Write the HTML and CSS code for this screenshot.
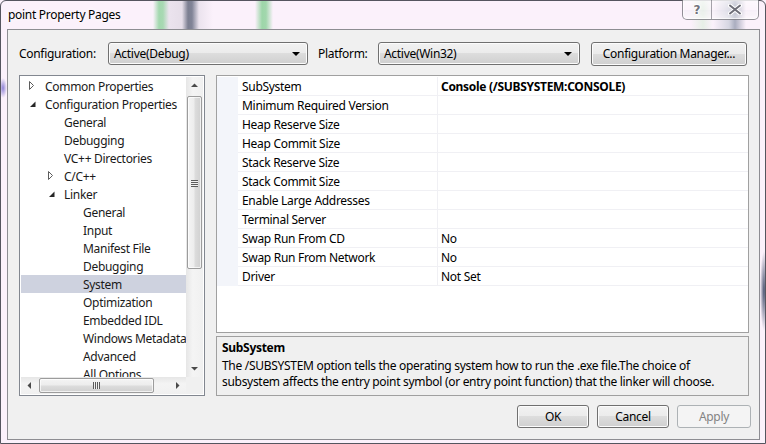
FILE: index.html
```html
<!DOCTYPE html>
<html>
<head>
<meta charset="utf-8">
<title>point Property Pages</title>
<link rel="stylesheet" href="styles.css">
</head>
<body>
<div class="window">
  <div class="titlebar">
    <span class="title">point Property Pages</span>
    <div class="caption-btns">
      <span class="cbtn cbtn-help">?</span>
      <span class="cbtn cbtn-close">
        <svg width="14" height="11" viewBox="0 0 14 11">
          <path d="M2 1.5 L12 9.5 M12 1.5 L2 9.5" stroke="#ffffff" stroke-width="4" stroke-linecap="round"/>
          <path d="M2 1.5 L12 9.5 M12 1.5 L2 9.5" stroke="#6e6e78" stroke-width="2" stroke-linecap="round"/>
        </svg>
      </span>
    </div>
  </div>
  <div class="client">
    <div class="toprow">
      <span class="lbl lbl-config">Configuration:</span>
      <div class="combo combo-config"><span class="combo-text">Active(Debug)</span><span class="caret"></span></div>
      <span class="lbl lbl-platform">Platform:</span>
      <div class="combo combo-platform"><span class="combo-text">Active(Win32)</span><span class="caret"></span></div>
      <button class="btn btn-cfgmgr">Configuration Manager...</button>
    </div>
    <div class="main">
      <div class="tree">
        <div class="tree-list">
          <div class="trow l0"><span class="exp"><svg width="18" height="18"><path d="M2.5 4.5 L6.5 8.5 L2.5 12.5 Z" fill="#fff" stroke="#5c5c5c"/></svg></span>Common Properties</div>
          <div class="trow l0"><span class="exp"><svg width="18" height="18"><path d="M3 12 L8.5 12 L8.5 6.5 Z" fill="#262626"/></svg></span>Configuration Properties</div>
          <div class="trow l1"><span class="exp"></span>General</div>
          <div class="trow l1"><span class="exp"></span>Debugging</div>
          <div class="trow l1"><span class="exp"></span>VC++ Directories</div>
          <div class="trow l1"><span class="exp"><svg width="18" height="18"><path d="M2.5 4.5 L6.5 8.5 L2.5 12.5 Z" fill="#fff" stroke="#5c5c5c"/></svg></span>C/C++</div>
          <div class="trow l1"><span class="exp"><svg width="18" height="18"><path d="M3 12 L8.5 12 L8.5 6.5 Z" fill="#262626"/></svg></span>Linker</div>
          <div class="trow l2"><span class="exp"></span>General</div>
          <div class="trow l2"><span class="exp"></span>Input</div>
          <div class="trow l2"><span class="exp"></span>Manifest File</div>
          <div class="trow l2"><span class="exp"></span>Debugging</div>
          <div class="trow l2 selected"><span class="exp"></span>System</div>
          <div class="trow l2"><span class="exp"></span>Optimization</div>
          <div class="trow l2"><span class="exp"></span>Embedded IDL</div>
          <div class="trow l2"><span class="exp"></span>Windows Metadata</div>
          <div class="trow l2"><span class="exp"></span>Advanced</div>
          <div class="trow l2"><span class="exp"></span>All Options</div>
        </div>
        <div class="vscroll">
          <div class="sb-arrow"><svg width="17" height="17"><path d="M5 10 L8.5 6.5 L12 10 Z" fill="#4a4a4a"/></svg></div>
          <div class="vtrack">
            <div class="vthumb"><span class="grip-v"></span></div>
          </div>
          <div class="sb-arrow"><svg width="17" height="17"><path d="M5 7 L8.5 10.5 L12 7 Z" fill="#4a4a4a"/></svg></div>
        </div>
        <div class="hscroll">
          <div class="sb-arrow"><svg width="17" height="17"><path d="M10 5 L6.5 8.5 L10 12 Z" fill="#4a4a4a"/></svg></div>
          <div class="htrack">
            <div class="hthumb"><span class="grip-h"></span></div>
          </div>
          <div class="sb-arrow"><svg width="17" height="17"><path d="M7 5 L10.5 8.5 L7 12 Z" fill="#4a4a4a"/></svg></div>
        </div>
        <div class="sb-corner"></div>
      </div>
      <div class="rightcol">
        <div class="pgrid">
          <div class="prow"><span class="gut"></span><span class="pname">SubSystem</span><span class="pval bold">Console (/SUBSYSTEM:CONSOLE)</span></div>
          <div class="prow"><span class="gut"></span><span class="pname">Minimum Required Version</span><span class="pval"></span></div>
          <div class="prow"><span class="gut"></span><span class="pname">Heap Reserve Size</span><span class="pval"></span></div>
          <div class="prow"><span class="gut"></span><span class="pname">Heap Commit Size</span><span class="pval"></span></div>
          <div class="prow"><span class="gut"></span><span class="pname">Stack Reserve Size</span><span class="pval"></span></div>
          <div class="prow"><span class="gut"></span><span class="pname">Stack Commit Size</span><span class="pval"></span></div>
          <div class="prow"><span class="gut"></span><span class="pname">Enable Large Addresses</span><span class="pval"></span></div>
          <div class="prow"><span class="gut"></span><span class="pname">Terminal Server</span><span class="pval"></span></div>
          <div class="prow"><span class="gut"></span><span class="pname">Swap Run From CD</span><span class="pval">No</span></div>
          <div class="prow"><span class="gut"></span><span class="pname">Swap Run From Network</span><span class="pval">No</span></div>
          <div class="prow"><span class="gut"></span><span class="pname">Driver</span><span class="pval">Not Set</span></div>
        </div>
        <div class="desc">
          <div class="desc-title">SubSystem</div>
          <div class="desc-text">The /SUBSYSTEM option tells the operating system how to run the .exe file.The choice of<br>subsystem affects the entry point symbol (or entry point function) that the linker will choose.</div>
        </div>
      </div>
    </div>
    <div class="buttons">
      <button class="btn btn-ok">OK</button>
      <button class="btn btn-cancel">Cancel</button>
      <button class="btn btn-apply" disabled>Apply</button>
    </div>
  </div>
</div>
</body>
</html>
```
FILE: styles.css
```css
html, body {
  margin: 0;
  padding: 0;
}
body {
  width: 766px;
  height: 444px;
  overflow: hidden;
  background: #fbf1fb;
  font-family: "Noto Sans", "Open Sans", sans-serif;
  font-size: 12px;
  letter-spacing: -0.3px;
  color: #000;
}
.window {
  position: relative;
  width: 766px;
  height: 444px;
  box-sizing: border-box;
  border: 1px solid #55555f;
  border-radius: 6px 6px 0 0;
  padding: 0 5px 3px 6px;
  display: flex;
  flex-direction: column;
  background:
    linear-gradient(90deg, #fbf1fb 0, #fbf1fb 152px, #a3d8af 158px, #a8d9b3 162px, #ebe3ee 168px, #e6dee9 181px, #7c7f91 187px, #818497 191px, #ebe3ee 198px, #fbf1fb 212px, #fbf1fb 254px, #9dd6a9 261px, #a2d7ad 265px, #fbf1fb 272px, #fbf1fb 690px, #e6efe6 702px, #fbf1fb 712px, #d6d6e2 728px, #aaadbf 734px, #fbf1fb 745px) top left / 100% 28px no-repeat,
    radial-gradient(ellipse 4px 40px at 763px 290px, #4d5673 0, rgba(77,86,115,0.5) 50%, rgba(251,241,251,0) 100%) no-repeat,
    radial-gradient(ellipse 4px 10px at 2px 87px, #8f83d6 0, rgba(251,241,251,0) 100%) no-repeat,
    #fbf1fb;
}
.titlebar {
  height: 28px;
  display: flex;
  align-items: center;
  flex: none;
}
.title {
  margin-left: 1px;
  margin-top: -1px;
  font-size: 12px;
  color: #000;
  text-shadow: 0 0 6px #fff, 0 0 6px #fff;
}
.caption-btns {
  position: absolute;
  top: -1px;
  right: 6px;
  display: flex;
  height: 19px;
  border: 1px solid rgba(60,60,70,0.55);
  border-top: none;
  border-radius: 0 0 5px 5px;
  overflow: hidden;
  background: linear-gradient(rgba(255,255,255,0.55), rgba(255,255,255,0.25) 50%, rgba(235,235,240,0.3) 51%, rgba(255,255,255,0.45));
  box-shadow: inset 0 0 0 1px rgba(255,255,255,0.6);
}
.cbtn {
  display: flex;
  align-items: center;
  justify-content: center;
}
.cbtn-help {
  width: 28px;
  border-right: 1px solid rgba(60,60,70,0.45);
  font-family: "DejaVu Sans", sans-serif;
  font-weight: bold;
  font-size: 12px;
  letter-spacing: 0;
  color: #72727c;
  text-shadow: 1px 0 0 #fff, -1px 0 0 #fff, 0 1px 0 #fff, 0 -1px 0 #fff;
}
.cbtn-close {
  width: 46px;
}
.client {
  flex: none;
  height: 411px;
  box-sizing: border-box;
  border: 1px solid #8d8d92;
  background: #f0f0f0;
  padding: 12px 8px 0 11px;
  display: flex;
  flex-direction: column;
}
.toprow {
  height: 23px;
  display: flex;
  align-items: center;
}
.lbl {
  white-space: nowrap;
}
.lbl-config {
  width: 89px;
}
.lbl-platform {
  margin-left: 10px;
  width: 60px;
}
.combo {
  height: 23px;
  box-sizing: border-box;
  border: 1px solid #707070;
  border-radius: 3px;
  background: linear-gradient(#f2f2f2 0%, #ebebeb 50%, #dddddd 50%, #cfcfcf 100%);
  box-shadow: inset 0 0 0 1px #fcfcfc;
  display: flex;
  align-items: center;
  padding: 0 4px 0 5px;
}
.combo-config {
  width: 200px;
}
.combo-platform {
  width: 202px;
}
.combo-text {
  flex: 1;
}
.caret {
  width: 0;
  height: 0;
  border-left: 4px solid transparent;
  border-right: 4px solid transparent;
  border-top: 4px solid #000;
  margin-right: 3px;
}
.btn {
  height: 23px;
  box-sizing: border-box;
  border: 1px solid #707070;
  border-radius: 3px;
  background: linear-gradient(#f2f2f2 0%, #ebebeb 50%, #dddddd 50%, #cfcfcf 100%);
  box-shadow: inset 0 0 0 1px #fcfcfc;
  font-family: inherit;
  font-size: 12px;
  letter-spacing: -0.3px;
  color: #000;
  padding: 0;
}
.btn-cfgmgr {
  margin-left: 11px;
  width: 156px;
  height: 24px;
}
.main {
  margin-top: 10px;
  display: flex;
  height: 321px;
}
.tree {
  width: 186px;
  height: 321px;
  box-sizing: border-box;
  border: 1px solid #828790;
  padding: 1px;
  background: #fff;
  display: grid;
  grid-template-columns: 165px 17px;
  grid-template-rows: 300px 17px;
}
.tree-list {
  overflow: hidden;
  white-space: nowrap;
}
.trow {
  height: 18px;
  box-sizing: border-box;
  padding-top: 2px;
  line-height: 16px;
  display: flex;
  align-items: flex-start;
  color: #1a1a1a;
}
.trow.selected {
  background: #ced2df;
}
.exp {
  width: 18px;
  height: 18px;
  flex: none;
  margin-top: -2px;
  margin-left: 6px;
}
.exp svg {
  display: block;
}
.l1 .exp {
  margin-left: 25px;
}
.l2 .exp {
  margin-left: 44px;
}
.vscroll {
  display: flex;
  flex-direction: column;
  background: linear-gradient(90deg, #e6e6e6, #f4f4f4 40%, #f0f0f0);
}
.sb-arrow {
  width: 17px;
  height: 17px;
  flex: none;
}
.sb-arrow svg {
  display: block;
}
.vtrack {
  flex: 1;
  padding: 2px 0 0 1px;
}
.vthumb {
  width: 15px;
  height: 173px;
  box-sizing: border-box;
  border: 1px solid #9c9c9c;
  border-radius: 2px;
  background: linear-gradient(90deg, #f4f4f4, #ededed 45%, #dcdcdc 55%, #d0d0d0);
  box-shadow: inset 0 0 0 1px rgba(255,255,255,0.7);
  display: flex;
  align-items: center;
  justify-content: center;
}
.grip-v {
  width: 7px;
  height: 7px;
  background: repeating-linear-gradient(#5c5c5c 0, #5c5c5c 1px, #f0f0f0 1px, #f0f0f0 2px);
  margin-top: 1px;
}
.hscroll {
  display: flex;
  background: linear-gradient(#e6e6e6, #f4f4f4 40%, #f0f0f0);
}
.htrack {
  flex: 1;
  padding: 1px 0 0 1px;
}
.hthumb {
  width: 115px;
  height: 15px;
  box-sizing: border-box;
  border: 1px solid #9c9c9c;
  border-radius: 2px;
  background: linear-gradient(#f4f4f4, #ededed 45%, #dcdcdc 55%, #d0d0d0);
  box-shadow: inset 0 0 0 1px rgba(255,255,255,0.7);
  display: flex;
  align-items: center;
  justify-content: center;
}
.grip-h {
  width: 7px;
  height: 7px;
  background: repeating-linear-gradient(90deg, #5c5c5c 0, #5c5c5c 1px, #f0f0f0 1px, #f0f0f0 2px);
}
.sb-corner {
  background: #f0f0f0;
}
.rightcol {
  margin-left: 11px;
  width: 533px;
  display: flex;
  flex-direction: column;
}
.pgrid {
  height: 258px;
  box-sizing: border-box;
  border: 1px solid #a0a0a0;
  padding-top: 1px;
  background: #fff;
}
.prow {
  display: grid;
  grid-template-columns: 21px 199px 1fr;
  height: 19px;
}
.gut {
  background: #f3f5fa;
}
.pname, .pval {
  box-sizing: border-box;
  height: 19px;
  line-height: 19px;
  border-bottom: 1px solid #f0f0f4;
  white-space: nowrap;
  overflow: hidden;
}
.pname {
  padding-left: 4px;
}
.pval {
  border-left: 1px solid #f0f0f4;
  padding-left: 3px;
}
.bold {
  font-weight: bold;
}
.desc {
  margin-top: 3px;
  height: 60px;
  box-sizing: border-box;
  border: 1px solid #a0a0a0;
  background: #f0f0f0;
  padding: 3px 5px 0 5px;
  line-height: 16px;
}
.desc-title {
  font-weight: bold;
  margin-bottom: 2px;
}
.buttons {
  margin-top: 9px;
  display: flex;
  justify-content: flex-end;
  gap: 8px;
}
.btn-ok, .btn-cancel {
  width: 72px;
}
.btn-apply {
  width: 74px;
  border-color: #adb2b5;
  background: #f4f4f4;
  box-shadow: none;
  color: #838383;
}
```
